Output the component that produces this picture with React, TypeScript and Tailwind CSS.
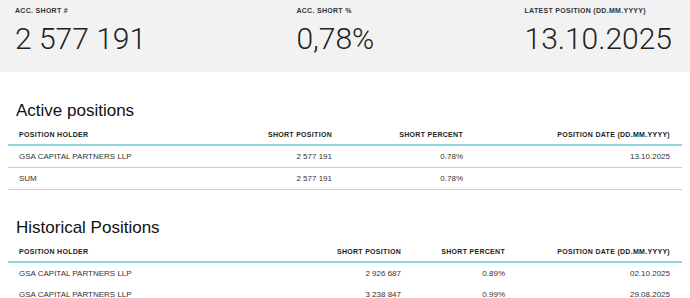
import React from "react";

type Row = { holder: string; position: string; percent: string; date: string };

const active: Row[] = [
  { holder: "GSA CAPITAL PARTNERS LLP", position: "2 577 191", percent: "0.78%", date: "13.10.2025" },
  { holder: "SUM", position: "2 577 191", percent: "0.78%", date: "" },
];

const historical: Row[] = [
  { holder: "GSA CAPITAL PARTNERS LLP", position: "2 926 687", percent: "0.89%", date: "02.10.2025" },
  { holder: "GSA CAPITAL PARTNERS LLP", position: "3 238 847", percent: "0.99%", date: "29.08.2025" },
];

function Stat({ label, value }: { label: string; value: string }) {
  return (
    <div className="flex flex-col">
      <span className="text-[7px] font-bold tracking-[0.3px] text-[#333] leading-[10px]">{label}</span>
      <span className="mt-[5px] text-[30px] font-light leading-[36px] text-[#222] font-['Roboto',sans-serif]">
        {value}
      </span>
    </div>
  );
}

function PositionsTable({ title, rows, cols, borders }: { title: string; rows: Row[]; cols: string; borders: boolean }) {
  return (
    <section className="px-[8px]">
      <h2 className="pl-[8px] text-[17px] leading-[20px] text-[#111]">{title}</h2>
      <div className={"mt-[5px] grid " + cols + " border-b-2 border-[#90d5df] text-[7px] font-bold tracking-[0.3px] text-[#222] h-[20px] items-center"}>
        <div className="pl-[11px]">POSITION HOLDER</div>
        <div className="pr-[12px] text-right">SHORT POSITION</div>
        <div className="pr-[12px] text-right">SHORT PERCENT</div>
        <div className="pr-[12px] text-right">POSITION DATE (DD.MM.YYYY)</div>
      </div>
      {rows.map((r, i) => (
        <div
          key={i}
          className={
            "grid " + cols + " items-center text-[8px] text-[#333] " +
            (borders ? "h-[22px] border-b border-[#c9cccd]" : "h-[21px]")
          }
        >
          <div className="pl-[11px]">{r.holder}</div>
          <div className="pr-[12px] text-right">{r.position}</div>
          <div className="pr-[12px] text-right">{r.percent}</div>
          <div className="pr-[12px] text-right">{r.date}</div>
        </div>
      ))}
    </section>
  );
}

export default function App() {
  return (
    <div className="w-[690px] h-[298px] overflow-hidden bg-white font-['Liberation_Sans',Arial,sans-serif]">
      <div className="h-[72px] bg-[#f2f2f2] flex justify-between pl-[15px] pr-[18px] pt-[6px]">
        <Stat label="ACC. SHORT #" value="2 577 191" />
        <Stat label="ACC. SHORT %" value="0,78%" />
        <Stat label="LATEST POSITION (DD.MM.YYYY)" value="13.10.2025" />
      </div>
      <div className="pt-[29px]">
        <PositionsTable title="Active positions" rows={active} cols="grid-cols-[202px_134px_131px_207px]" borders />
      </div>
      <div className="pt-[28px]">
        <PositionsTable title="Historical Positions" rows={historical} cols="grid-cols-[275px_130px_104px_165px]" borders={false} />
      </div>
    </div>
  );
}
